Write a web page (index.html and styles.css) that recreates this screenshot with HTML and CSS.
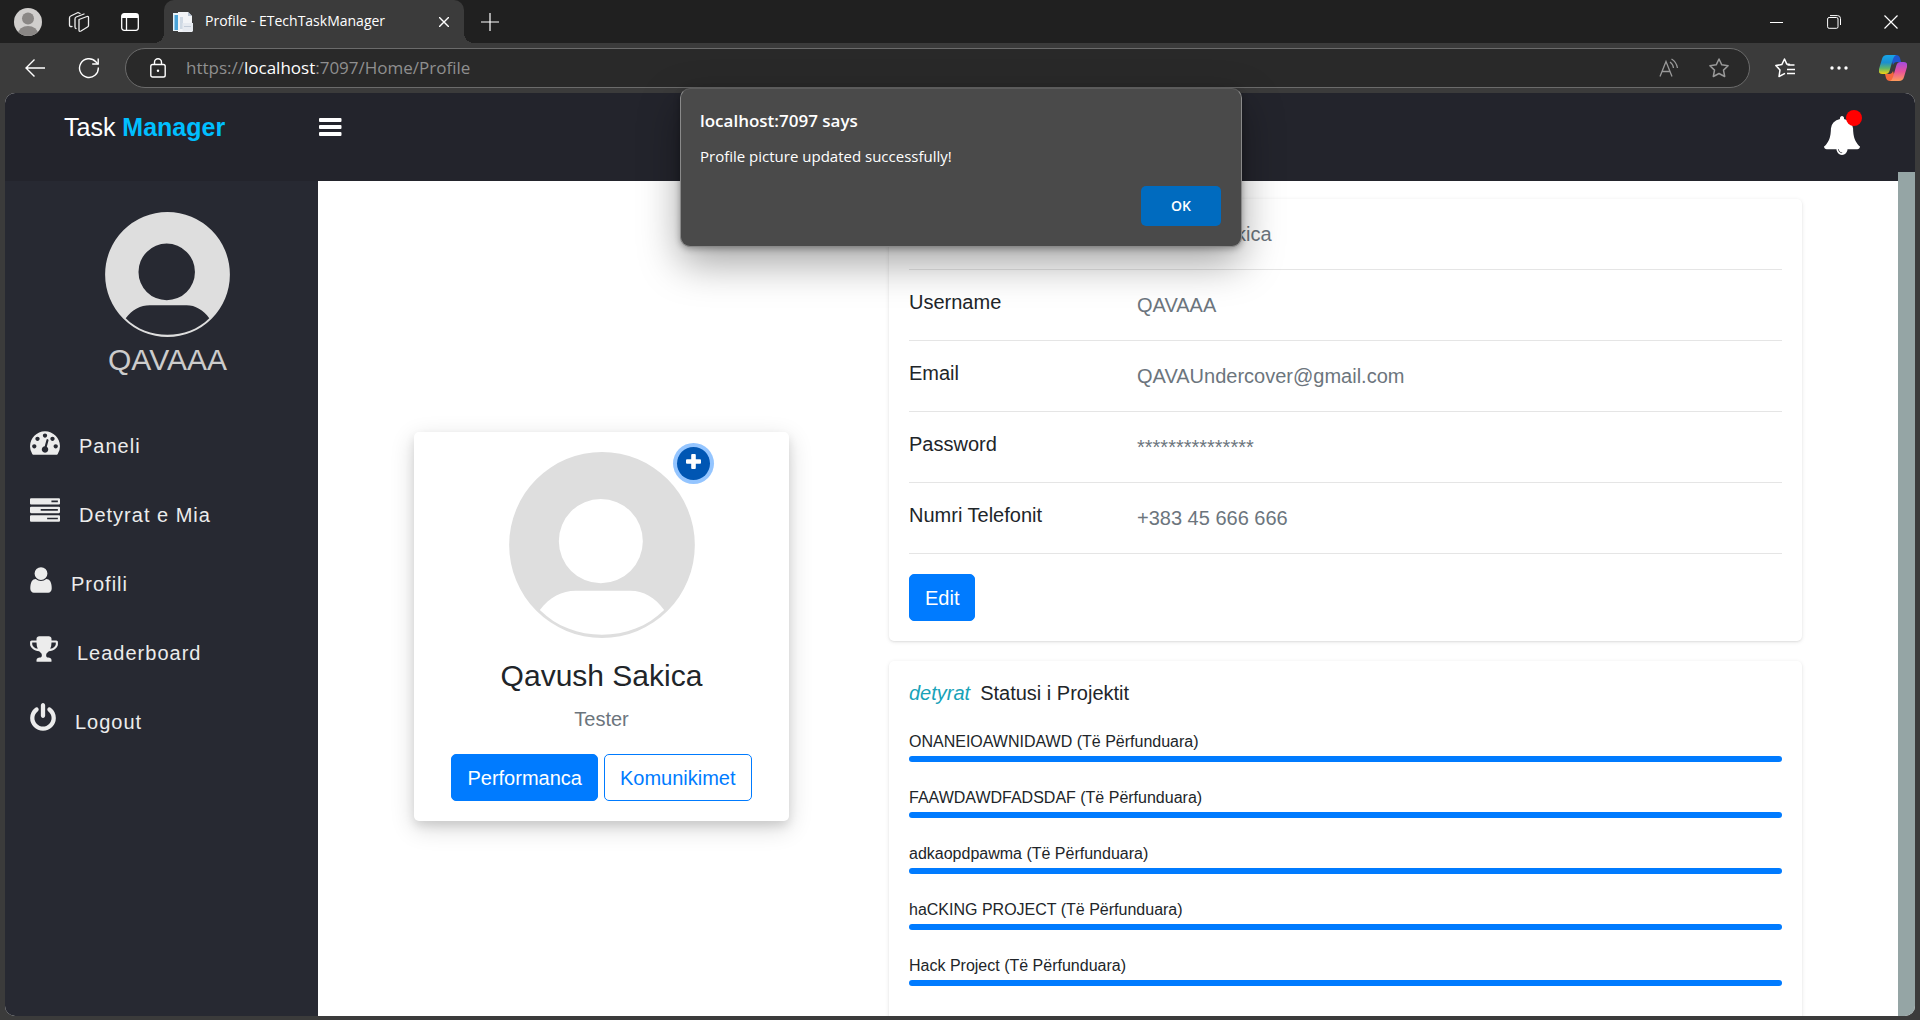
FILE: index.html
```html
<!DOCTYPE html>
<html lang="sq">
<head>
<meta charset="utf-8">
<title>Profile - ETechTaskManager</title>
<link rel="stylesheet" href="styles.css">
</head>
<body>
<div class="browser">
  <div class="tabstrip">
    <button class="chrome-btn" aria-label="Account">
      <svg width="28" height="28" viewBox="0 0 28 28"><defs><clipPath id="acc"><circle cx="14" cy="14" r="14"/></clipPath></defs><g clip-path="url(#acc)"><rect width="28" height="28" fill="#d0cecc"/><circle cx="14" cy="10.500" r="6" fill="#8a8785"/><ellipse cx="14" cy="26" rx="10" ry="8" fill="#8a8785"/></g></svg>
    </button>
    <button class="chrome-btn" aria-label="Workspaces">
      <svg width="22" height="22" viewBox="0 0 22 22" fill="none" stroke="#eee" stroke-width="1.300" stroke-linejoin="round" stroke-linecap="round"><path d="M11 8.500 19 5.500q1.500-.5 1.500 1v8q0 1-1 1.500l-6.500 4q-2 1-2-1z"/><path d="M8 17.500q-1 0-1-1.500V8q0-1.500 1.200-2L16 3"/><path d="M4 15.500q-2.500.5-2.500-1.500V7q0-1.500 1.200-2L10 1.500l2 1"/></svg>
    </button>
    <button class="chrome-btn" aria-label="Tab actions">
      <svg width="18" height="18" viewBox="0 0 18 18"><rect x=".7" y=".7" width="16.600" height="16.600" rx="2.500" fill="none" stroke="#fff" stroke-width="1.300"/><path d="M1 1h16v4H1z" fill="#fff"/><path d="M5.500 5v12" stroke="#fff" stroke-width="1.300"/></svg>
    </button>
    <div class="tab">
      <svg width="20" height="20" viewBox="0 0 20 20"><path d="M0 1h7v18H0z" fill="#e4f2fa"/><path d="M1.500 3H5v15H1.500z" fill="#4aa3d8"/><path d="M5 0h10l4 4v16H5z" fill="#f2f4f7"/><path d="M15 0v4h4z" fill="#b9c6d4"/><path d="M7 5h3v12H7z" fill="#cfd9e4"/><path d="M9.500 11H20v8.500H9.500z" fill="#e6eaf0"/><path d="M11 14h7v1h-7z" fill="#c3ccd8"/></svg>
      <span class="tab-title">Profile - ETechTaskManager</span>
      <button class="tab-close" aria-label="Close tab"><svg width="10" height="10" viewBox="0 0 10 10"><path d="M0 0l10 10M10 0 0 10" stroke="#fff" stroke-width="1.400"/></svg></button>
    </div>
    <button class="chrome-btn" aria-label="New tab"><svg width="18" height="18" viewBox="0 0 18 18"><path d="M9 0v18M0 9h18" stroke="#fff" stroke-width="1.200"/></svg></button>
    <div class="window-controls">
      <button aria-label="Minimize"><svg width="14" height="14" viewBox="0 0 14 14"><path d="M0 7.500h13" stroke="#fff"/></svg></button>
      <button aria-label="Restore"><svg width="14" height="14" viewBox="0 0 14 14" fill="none" stroke="#fff"><rect x=".6" y="2.500" width="10.400" height="10.800" rx="1.500"/><path d="M3 .6h7.500q3 0 3 3V10" stroke-width="1"/></svg></button>
      <button aria-label="Close"><svg width="14" height="14" viewBox="0 0 14 14"><path d="M.5.500l13 13M13.500.500l-13 13" stroke="#fff" stroke-width="1.200"/></svg></button>
    </div>
  </div>

  <div class="toolbar">
    <button class="tool-btn" aria-label="Back"><svg width="22" height="20" viewBox="0 0 22 20" fill="none" stroke="#fff" stroke-width="1.400"><path d="M10.500 1.500 2 10l8.500 8.500M2 10h19"/></svg></button>
    <button class="tool-btn" aria-label="Refresh"><svg width="22" height="22" viewBox="0 0 22 22" fill="none" stroke="#fff" stroke-width="1.400"><path d="M20.300 10.500A9.400 9.400 0 1 1 17.800 4.700L20 7"/><path d="M20.200 1.500V7h-6"/></svg></button>
    <div class="address">
      <svg width="16" height="20" viewBox="0 0 16 20" fill="none" stroke="#fff" stroke-width="1.400"><rect x=".8" y="6.500" width="14.400" height="12.500" rx="1.800"/><path d="M4.500 6.500V4.300a3.500 3.500 0 0 1 7 0v2.200"/><circle cx="8" cy="12.800" r="1.200" fill="#fff" stroke="none"/></svg>
      <div class="url" role="textbox" aria-label="Address">https://<span class="url-host">localhost</span>:7097/Home/Profile</div>
      <button class="address-btn" aria-label="Read aloud"><svg width="20" height="20" viewBox="0 0 20 20" fill="none" stroke="#999" stroke-width="1.300"><path d="M1 18.500 7 3.500l6 15M3.200 13.500h7.600"/><path d="M11 4q3 2 3.500 6M12.500 1q5 3 6 9"/></svg></button>
      <button class="address-btn" aria-label="Add to favorites"><svg width="22" height="22" viewBox="0 0 22 22" fill="none" stroke="#999" stroke-width="1.500" stroke-linejoin="round"><path d="M11 2l2.800 5.800 6.300.9-4.600 4.400 1.200 6.400L11 16.500l-5.700 3 1.200-6.400L1.900 8.700l6.300-.9z"/></svg></button>
    </div>
    <button class="tool-btn" aria-label="Favorites"><svg width="22" height="22" viewBox="0 0 22 22" fill="none" stroke="#fff" stroke-width="1.500" stroke-linejoin="round"><path d="M16 7.500l-3.200-.4L10.500 2 7.800 7.600l-6 .9L6 12.900 5 19.500l6-3.200"/><path d="M13.500 8h7M13 12.500h8M13 16.500h8"/></svg></button>
    <button class="tool-btn" aria-label="Settings and more"><svg width="18" height="4" viewBox="0 0 18 4" fill="#fff"><circle cx="2" cy="2" r="1.700"/><circle cx="9" cy="2" r="1.700"/><circle cx="16" cy="2" r="1.700"/></svg></button>
    <button class="tool-btn" aria-label="Copilot">
      <svg width="28" height="26" viewBox="0 0 28 26">
        <defs>
          <linearGradient id="cpa" x1="0" y1="0" x2="0" y2="1"><stop offset="0" stop-color="#17a5e8"/><stop offset=".4" stop-color="#1b8fd0"/><stop offset=".7" stop-color="#5fb56a"/><stop offset="1" stop-color="#f5d311"/></linearGradient>
          <linearGradient id="cpb" x1="0" y1="0" x2="0" y2="1"><stop offset="0" stop-color="#a24be0"/><stop offset=".5" stop-color="#e8529b"/><stop offset="1" stop-color="#ff9c5a"/></linearGradient>
        </defs>
        <path d="M11 0h6q3 0 4 3l1 4h-4q-3 0-4 3z" fill="#1f56d0"/>
        <path d="M17 26h-6q-3 0-4-3l-1-4h5q2 0 3-3z" fill="#f4683c"/>
        <path d="M8 0h9q-2 1-3 4l-3.500 12q-1 3-4 3H3q-4 0-3-5L3 4q1-4 5-4z" fill="url(#cpa)"/>
        <path d="M20 26h-9q2-1 3-4l3.500-12q1-3 4-3H25q4 0 3 5l-3 10q-1 4-5 4z" fill="url(#cpb)"/>
      </svg>
    </button>
  </div>

  <div class="page">
    <header class="topbar">
      <a class="brand" href="#">Task <strong>Manager</strong></a>
      <button class="menu-toggle" aria-label="Toggle menu"><svg width="23" height="18" viewBox="0 0 23 18" fill="#fff"><rect width="22.500" height="4" rx="1"/><rect y="7" width="22.500" height="4" rx="1"/><rect y="14" width="22.500" height="4" rx="1"/></svg></button>
      <button class="bell" aria-label="Notifications">
        <svg width="36" height="39" viewBox="64 0 1664 1792" fill="#fff"><path d="M912 1696q0-16-16-16-59 0-101.500-42.500t-42.500-101.500q0-16-16-16t-16 16q0 73 51.500 124.500t124.500 51.500q16 0 16-16zm816-288q0 52-38 90t-90 38h-448q0 106-75 181t-181 75-181-75-75-181h-448q-52 0-90-38t-38-90q50-42 91-88t85-119.500 74.500-158.500 50-206 19.500-260q0-152 117-282.500t307-158.500q-8-19-8-39 0-40 28-68t68-28 68 28 28 68q0 20-8 39 190 28 307 158.500t117 282.500q0 139 19.500 260t50 206 74.500 158.500 85 119.500 91 88z"/></svg>
        <span class="bell-dot"></span>
      </button>
    </header>

    <div class="body">
      <nav class="sidebar">
        <div class="user">
          <svg width="125" height="125" viewBox="326 93 557 558"><use href="#person"/></svg>
          <span class="user-name">QAVAAA</span>
        </div>
        <ul class="menu">
          <li><a href="#"><svg width="30" height="30" viewBox="0 0 1792 1792"><path d="M384 1152q0-53-37.500-90.500t-90.500-37.500-90.500 37.500-37.500 90.500 37.500 90.500 90.500 37.500 90.500-37.500 37.500-90.500zm192-448q0-53-37.500-90.500t-90.500-37.500-90.500 37.500-37.500 90.500 37.500 90.500 90.500 37.500 90.500-37.500 37.500-90.500zm428 481l101-382q6-26-7.500-48.500t-38.500-29.500-48 6.500-30 39.500l-101 382q-60 5-107 43.500t-63 98.500q-20 77 20 146t117 89 146-20 89-117q16-60-6-117t-72-91zm660-33q0-53-37.500-90.500t-90.500-37.500-90.500 37.500-37.500 90.500 37.500 90.500 90.500 37.500 90.500-37.500 37.500-90.500zm-640-640q0-53-37.500-90.500t-90.500-37.500-90.500 37.500-37.500 90.500 37.500 90.500 90.500 37.500 90.500-37.500 37.500-90.500zm448 192q0-53-37.500-90.500t-90.500-37.500-90.500 37.500-37.500 90.500 37.500 90.500 90.500 37.500 90.500-37.500 37.500-90.500zm320 448q0 261-141 483-19 29-54 29h-1402q-35 0-54-29-141-221-141-483 0-182 71-348t191-286 286-191 348-71 348 71 286 191 191 286 71 348z"/></svg><span>Paneli</span></a></li>
          <li><a href="#"><svg width="30" height="30" viewBox="0 0 1792 1792"><path fill-rule="evenodd" d="M64 128h1664q64 0 64 64v256q0 64-64 64H64q-64 0-64-64V192q0-64 64-64zM1280 270v100h384V270zM64 640h1664q64 0 64 64v256q0 64-64 64H64q-64 0-64-64V704q0-64 64-64zM640 782v100h1024V782zM64 1152h1664q64 0 64 64v256q0 64-64 64H64q-64 0-64-64v-256q0-64 64-64zM1024 1294v100h640v-100z"/></svg><span>Detyrat e Mia</span></a></li>
          <li><a href="#"><svg width="22" height="30" viewBox="256 0 1280 1792"><path d="M1536 1399q0 109-62.500 187t-150.500 78h-854q-88 0-150.500-78t-62.500-187q0-85 8.500-160.500t31.500-152 58.500-131 94-89 134.500-34.500q131 128 313 128t313-128q76 0 134.500 34.500t94 89 58.500 131 31.500 152 8.500 160.500zm-256-887q0 159-112.500 271.500t-271.500 112.500-271.500-112.500-112.500-271.500 112.500-271.500 271.500-112.500 271.500 112.500 112.500 271.500z"/></svg><span>Profili</span></a></li>
          <li><a href="#"><svg width="28" height="30" viewBox="64 0 1664 1792"><path d="M522 883q-74-162-74-371h-256v96q0 78 94.500 162t235.500 113zm1078-275v-96h-256q0 209-74 371 141-29 235.500-113t94.500-162zm128-128v128q0 71-41.500 143t-112 130-173 97.500-215.500 44.500q-42 54-95 95-38 34-52.500 72.500t-14.500 89.500q0 54 30.500 91t97.500 37q75 0 133.500 45.500t58.500 114.500v64q0 14-9 23t-23 9h-832q-14 0-23-9t-9-23v-64q0-69 58.500-114.500t133.500-45.500q67 0 97.500-37t30.500-91q0-51-14.500-89.500t-52.500-72.500q-53-41-95-95-113-5-215.500-44.500t-173-97.500-112-130-41.500-143v-128q0-40 28-68t68-28h288v-96q0-66 47-113t113-47h576q66 0 113 47t47 113v96h288q40 0 68 28t28 68z"/></svg><span>Leaderboard</span></a></li>
          <li><a href="#"><svg width="26" height="30" viewBox="128 0 1536 1792"><path d="M1664 896q0 156-61 298t-164 245-245 164-298 61-298-61-245-164-164-245-61-298q0-182 80.500-343t226.500-270q43-32 95.500-25t83.500 50q32 42 24.500 94.500t-49.500 84.500q-98 74-151.500 181t-53.500 228q0 104 40.500 198.500t109.500 163.500 163.500 109.500 198.500 40.500 198.500-40.500 163.500-109.500 109.500-163.500 40.500-198.500q0-121-53.500-228t-151.500-181q-42-32-49.500-84.500t24.500-94.500q31-43 84-50t95 25q146 109 226.500 270t80.500 343zm-640-768v640q0 52-38 90t-90 38-90-38-38-90v-640q0-52 38-90t90-38 90 38 38 90z"/></svg><span>Logout</span></a></li>
        </ul>
      </nav>

      <main class="content">
        <section class="card profile">
          <button class="add-photo" aria-label="Change profile picture"><svg width="15" height="15" viewBox="0 0 15 15" fill="#fff"><rect x="5.200" width="4.600" height="15" rx="1"/><rect y="5.200" width="15" height="4.600" rx="1"/></svg></button>
          <svg class="photo" width="186" height="186" viewBox="326 93 557 558">
            <path id="person" fill="#dedede" fill-rule="evenodd" d="M326 372a278.500 279 0 1 0 557 0a278.500 279 0 1 0-557 0zM475 360.500a126 126.500 0 1 0 252 0a126 126.500 0 1 0-252 0zM418 567C447 528 485 509 525 509H690C728 509 765 530 791 567C740 617 675 641 604 641C535 641 468 617 418 567z"/>
          </svg>
          <h4>Qavush Sakica</h4>
          <p class="role">Tester</p>
          <div class="actions">
            <button class="btn">Performanca</button>
            <button class="btn btn-outline">Komunikimet</button>
          </div>
        </section>

        <div class="details">
          <section class="card">
            <dl class="info">
              <div><dt>Emri</dt><dd>Qavush Sakica</dd></div>
              <div><dt>Username</dt><dd>QAVAAA</dd></div>
              <div><dt>Email</dt><dd>QAVAUndercover@gmail.com</dd></div>
              <div><dt>Password</dt><dd>***************</dd></div>
              <div><dt>Numri Telefonit</dt><dd>+383 45 666 666</dd></div>
            </dl>
            <button class="btn">Edit</button>
          </section>
          <section class="card">
            <h6><i>detyrat</i>Statusi i Projektit</h6>
            <div class="task"><small>ONANEIOAWNIDAWD (Të Përfunduara)</small><div class="bar"></div></div>
            <div class="task"><small>FAAWDAWDFADSDAF (Të Përfunduara)</small><div class="bar"></div></div>
            <div class="task"><small>adkaopdpawma (Të Përfunduara)</small><div class="bar"></div></div>
            <div class="task"><small>haCKING PROJECT (Të Përfunduara)</small><div class="bar"></div></div>
            <div class="task"><small>Hack Project (Të Përfunduara)</small><div class="bar"></div></div>
          </section>
        </div>
      </main>
    </div>
    <div class="scroll-thumb"></div>
  </div>

  <div class="dialog" role="alertdialog" aria-labelledby="dlg-title" aria-describedby="dlg-text">
    <h2 id="dlg-title">localhost:7097 says</h2>
    <p id="dlg-text">Profile picture updated successfully!</p>
    <button>OK</button>
  </div>
</div>
</body>
</html>
```
FILE: styles.css
```css
* { box-sizing: border-box; }

body {
  margin: 0;
  font-family: "Liberation Sans", Arial, sans-serif;
  font-size: 20px;
  line-height: 30px;
  color: #212529;
}

button {
  font: inherit;
  color: inherit;
  background: none;
  border: 0;
  padding: 0;
}

svg { display: block; flex: none; }
h2, h4, h6, p, dl, dd, ul { margin: 0; padding: 0; font-weight: 400; }
a { color: inherit; text-decoration: none; }

.browser {
  position: relative;
  display: flex;
  flex-direction: column;
  height: 100vh;
  overflow: hidden;
  background: #3b3b3b;
}

/* Browser window */
.tabstrip, .toolbar, .address, .window-controls, .tab {
  display: flex;
  align-items: center;
}

.tabstrip {
  height: 43px;
  padding-left: 2px;
  background: #202020;
  font-family: "Open Sans", "Noto Sans", sans-serif;
}

.chrome-btn, .tool-btn, .window-controls button, .address-btn, .tab-close {
  display: flex;
  align-items: center;
  justify-content: center;
}

.chrome-btn { width: 51px; height: 42px; }

.tab {
  position: relative;
  width: 300px;
  height: 43px;
  margin-left: 9px;
  padding: 0 15px 0 9px;
  background: #3b3b3b;
  border-radius: 10px 10px 0 0;
  color: #fff;
}

.tab::before, .tab::after {
  content: "";
  position: absolute;
  bottom: 0;
  width: 10px;
  height: 10px;
}
.tab::before { left: -10px; background: radial-gradient(circle at 0 0, #202020 10px, #3b3b3b 10px); }
.tab::after { right: -10px; background: radial-gradient(circle at 100% 0, #202020 10px, #3b3b3b 10px); }

.tab-title { flex: 1; margin-left: 12px; font-size: 14px; line-height: 28px; padding-bottom: 2px; }

.window-controls { margin-left: auto; padding-right: 1px; }
.window-controls button { width: 57px; height: 42px; }

.toolbar { height: 50px; padding-left: 8px; }
.tool-btn { width: 54px; height: 48px; }

.address {
  flex: 1;
  height: 40px;
  margin: 0 8px 0 9px;
  padding: 0 19px 0 24px;
  background: #292929;
  border: 1px solid #6b6b6b;
  border-radius: 20px;
}

.url {
  flex: 1;
  margin-left: 20px;
  font-family: "Open Sans", "Noto Sans", sans-serif;
  font-size: 17px;
  color: #8f8f8f;
}
.url-host { color: #fff; }
.address-btn { width: 22px; height: 36px; margin-left: 28px; }

/* Web page */
.page {
  position: relative;
  flex: 1;
  min-height: 0;
  display: flex;
  flex-direction: column;
  margin: 0 5px 4px;
  border-radius: 10px;
  overflow: hidden;
  background: #fff;
}

.topbar {
  display: flex;
  align-items: flex-start;
  flex: none;
  height: 88px;
  padding: 19px 55px 0 59px;
  background: #23242c;
  color: #fff;
}
.brand { width: 255px; font-size: 25px; }
.brand strong { color: #00bfff; }
.menu-toggle { padding-top: 6px; }
.bell { position: relative; margin-left: auto; padding-top: 4px; }
.bell-dot {
  position: absolute;
  top: -2px;
  right: -2px;
  width: 16px;
  height: 16px;
  border-radius: 50%;
  background: #f00;
}

.body { flex: 1; min-height: 0; display: flex; }

.sidebar { flex: none; width: 313px; background: #272932; }
.user {
  display: flex;
  flex-direction: column;
  align-items: center;
  padding: 31px 0 0 12px;
}
.user-name { margin-top: 5px; font-size: 30px; line-height: 36px; color: #ccc; }

.menu {
  display: flex;
  flex-direction: column;
  gap: 35px;
  margin-top: 49px;
  padding-left: 25px;
  list-style: none;
}
.menu a {
  display: flex;
  align-items: flex-start;
  gap: 19px;
  color: #ececec;
  fill: #ececec;
  letter-spacing: 1px;
}
.menu span { padding-top: 4px; }

.content {
  flex: 1;
  display: grid;
  grid-template-columns: 375px 1fr;
  column-gap: 100px;
  align-items: center;
  align-content: start;
  padding: 18px 113px 0 96px;
  overflow: hidden;
}

.card {
  padding: 20px;
  background: #fff;
  border-radius: 5px;
  box-shadow: 0 1px 4px rgba(0, 0, 0, .1), 0 1px 2px rgba(0, 0, 0, .06);
}

.profile {
  position: relative;
  display: flex;
  flex-direction: column;
  align-items: center;
  box-shadow: 0 5px 10px rgba(0, 0, 0, .1), 0 7px 25px rgba(0, 0, 0, .16);
}
.profile h4 { margin: 20px 0 10px; font-size: 30px; line-height: 36px; }
.role { margin-bottom: 20px; color: #6c757d; }
.actions { display: flex; gap: 6px; }

.add-photo {
  position: absolute;
  top: 15px;
  right: 79px;
  display: flex;
  justify-content: center;
  width: 33px;
  height: 33px;
  padding-top: 7px;
  border-radius: 50%;
  background: #0056b3;
  box-shadow: 0 0 0 4px #94c5ff;
}

.btn {
  height: 47px;
  padding: 0 15px;
  border: 1px solid #007bff;
  border-radius: 5px;
  background: #007bff;
  color: #fff;
}
.btn-outline { background: #fff; color: #007bff; }

.details {
  display: flex;
  flex-direction: column;
  gap: 20px;
  padding-bottom: 24px;
}

.info > div {
  display: grid;
  grid-template-columns: 228px 1fr;
  margin-bottom: 20px;
  padding-bottom: 20px;
  border-bottom: 1px solid #e5e5e5;
}
.info dt { line-height: 24px; }
.info dd { color: #6c757d; }

h6 { margin-bottom: 25px; font-size: 20px; line-height: 24px; }
h6 i { margin-right: 10px; color: #17a2b8; }

.task { margin-bottom: 24px; }
.task small { display: block; margin-bottom: 2px; font-size: 16px; line-height: 24px; }
.bar { height: 6px; border-radius: 3px; background: #007bff; }

.scroll-thumb {
  position: absolute;
  top: 79px;
  right: 0;
  bottom: 0;
  width: 17px;
  background: #95a5a5;
}

/* Alert box */
.dialog {
  position: absolute;
  top: 88px;
  left: 50%;
  width: 562px;
  margin-left: -280px;
  display: flex;
  flex-direction: column;
  padding: 17px 20px 20px 19px;
  background: #4a4a4a;
  border: 1px solid #8a8a8a;
  border-top-color: #5c5c5c;
  border-radius: 10px;
  box-shadow: 0 16px 40px rgba(0, 0, 0, .36), 0 2px 6px rgba(0, 0, 0, .3);
  color: #fff;
  font-family: "Open Sans", "Noto Sans", sans-serif;
  font-size: 15px;
}
.dialog h2 { margin-bottom: 5px; font-size: 17px; font-weight: 600; }
.dialog button {
  align-self: flex-end;
  width: 80px;
  height: 40px;
  margin-top: 15px;
  border-radius: 5px;
  background: #006bbf;
  font-size: 14px;
  font-weight: 600;
}
```
